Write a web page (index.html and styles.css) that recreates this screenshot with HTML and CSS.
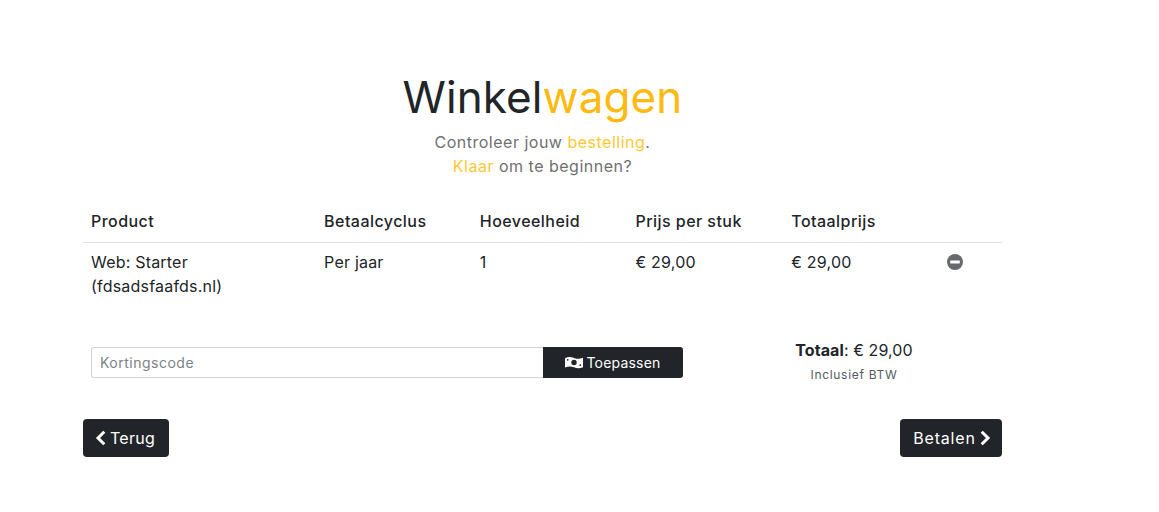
FILE: index.html
```html
<!DOCTYPE html>
<html lang="nl">
<head>
    <meta charset="UTF-8">
    <meta name="viewport" content="width=device-width, initial-scale=1.0">
    <title>Winkelwagen</title>
    <link rel="stylesheet" href="styles.css">
</head>
<body>
    <div class="container">
        <div class="intro">
            <h1>Winkel<span class="accent">wagen</span></h1>
            <p>Controleer jouw <span class="accent-soft">bestelling</span>.<br><span class="accent-soft">Klaar</span> om te beginnen?</p>
        </div>

        <table class="cart">
            <thead>
                <tr>
                    <th class="col-product">Product</th>
                    <th>Betaalcyclus</th>
                    <th>Hoeveelheid</th>
                    <th>Prijs per stuk</th>
                    <th>Totaalprijs</th>
                    <th class="col-remove"></th>
                </tr>
            </thead>
            <tbody>
                <tr>
                    <td>Web: Starter<br>(fdsadsfaafds.nl)</td>
                    <td>Per jaar</td>
                    <td>1</td>
                    <td>€ 29,00</td>
                    <td>€ 29,00</td>
                    <td>
                        <svg class="remove" viewBox="0 0 16 16" aria-label="Verwijderen">
                            <circle cx="8" cy="8" r="8" fill="#666a6e"/>
                            <rect x="3.2" y="6.6" width="9.6" height="2.8" rx=".6" fill="#fff"/>
                        </svg>
                    </td>
                </tr>
            </tbody>
        </table>

        <div class="summary">
            <div class="coupon">
                <input type="text" placeholder="Kortingscode">
                <button class="apply">
                    <svg class="money" viewBox="0 0 20 14">
                        <path d="M0 2.2C3.500.6 6.500.7 10 2c3.500 1.300 6.500 1.300 10-.2v10.400c-3.500 1.600-6.500 1.500-10 .2-3.500-1.300-6.500-1.300-10 .2z" fill="#fff"/>
                        <circle cx="10" cy="7" r="3" fill="#212529"/>
                        <circle cx="3" cy="4" r="1" fill="#212529"/>
                        <circle cx="17" cy="10" r="1" fill="#212529"/>
                    </svg>
                    Toepassen
                </button>
            </div>
            <div class="total">
                <div><strong>Totaal</strong>: € 29,00</div>
                <small>Inclusief BTW</small>
            </div>
        </div>

        <div class="nav-buttons">
            <button class="nav-btn back-btn">
                <svg class="chevron" viewBox="0 0 11 16"><path d="M9.300 1.800 3 8l6.300 6.200" fill="none" stroke="#fff" stroke-width="3"/></svg>
                Terug
            </button>
            <button class="nav-btn next-btn">
                Betalen
                <svg class="chevron" viewBox="0 0 11 16"><path d="M1.700 1.800 8 8l-6.300 6.200" fill="none" stroke="#fff" stroke-width="3"/></svg>
            </button>
        </div>
    </div>
</body>
</html>
```
FILE: styles.css
```css
body {
    font-family: Inter, "Open Sans", sans-serif;
    color: #212529;
    background-color: #fff;
    margin: 0;
    font-size: 16px;
    line-height: 24px;
}
.container {
    width: 919px;
    margin-left: 83px;
    padding-top: 72px;
}
.intro {
    text-align: center;
    margin-bottom: 23px;
}
h1 {
    font-size: 44px;
    font-weight: 400;
    line-height: 50px;
    letter-spacing: .1px;
    margin: 0 0 8px;
}
.intro p {
    margin: 0;
    color: #707070;
    letter-spacing: .5px;
}
.accent {
    color: #ffb90f;
}
.accent-soft {
    color: #ffc832;
}
.cart {
    width: 100%;
    border-collapse: collapse;
    table-layout: fixed;
}
.cart th {
    width: 139.67px;
    font-weight: 450;
    text-align: left;
    letter-spacing: .45px;
    padding: 8px 8px 9px;
    border-bottom: 1px solid #dee2e6;
}
.cart td {
    padding: 7px 8px 8px;
    vertical-align: top;
    letter-spacing: .2px;
}
.cart .col-product {
    width: 217px;
}
.cart .col-remove {
    width: 47px;
}
.remove {
    display: block;
    width: 16px;
    height: 16px;
    margin-top: 4px;
}
.summary {
    display: flex;
    justify-content: space-between;
    padding: 0 8px;
    margin-top: 32px;
}
.coupon {
    display: flex;
    width: 592px;
    height: 31px;
    margin-top: 9px;
}
.coupon input {
    flex: 1;
    min-width: 0;
    font: inherit;
    font-size: 14px;
    letter-spacing: .5px;
    padding: 0 8px;
    border: 1px solid #ced4da;
    border-right: none;
    border-radius: 3px 0 0 3px;
    outline: none;
}
.coupon input::placeholder {
    color: #7b8288;
}
.apply {
    width: 140px;
    font: inherit;
    font-size: 14px;
    letter-spacing: .2px;
    color: #fff;
    background-color: #212529;
    border: none;
    border-radius: 0 3px 3px 0;
    display: flex;
    align-items: center;
    justify-content: center;
    gap: 3px;
}
.money {
    width: 18px;
    height: 13px;
}
.total {
    width: 236px;
    margin-right: 22px;
    text-align: center;
    letter-spacing: .1px;
}
.total small {
    display: block;
    font-size: 12px;
    letter-spacing: .7px;
    color: #555b61;
    margin-top: 4px;
    line-height: 18px;
}
.nav-buttons {
    display: flex;
    justify-content: space-between;
    margin-top: 35px;
}
.nav-btn {
    height: 38px;
    font: inherit;
    color: #fff;
    background-color: #212529;
    border: none;
    border-radius: 4px;
    display: flex;
    align-items: center;
    justify-content: center;
    gap: 4px;
    padding: 0;
}
.back-btn {
    width: 86px;
    padding-right: 2px;
    letter-spacing: .3px;
}
.next-btn {
    width: 102px;
    padding-left: 2px;
    letter-spacing: .8px;
}
.chevron {
    width: 11px;
    height: 16px;
}
```
